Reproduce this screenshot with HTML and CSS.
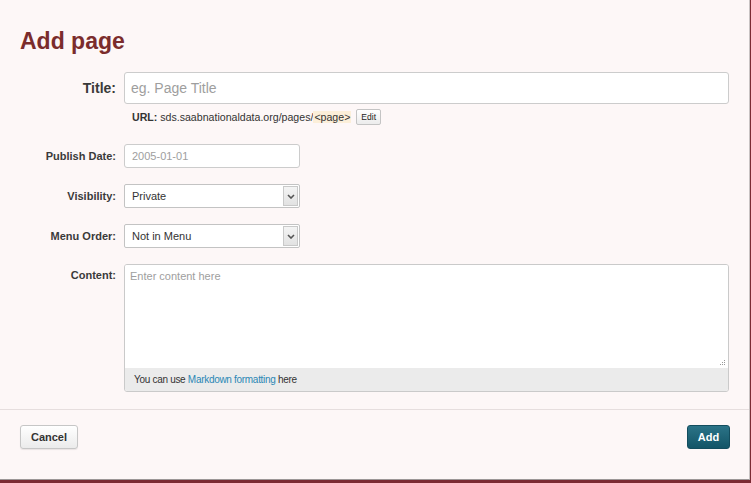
FILE: index.html
```html
<!DOCTYPE html>
<html>
<head>
<meta charset="utf-8">
<link rel="stylesheet" href="styles.css">
</head>
<body>
<div class="dialog">
  <h1 class="heading">Add page</h1>
  <div class="form">
    <div class="row row-title">
      <label class="label label-lg">Title:</label>
      <div class="input input-lg placeholder">eg. Page Title</div>
    </div>
    <div class="row row-url">
      <span></span>
      <div class="url"><b>URL:</b>&nbsp;sds.saabnationaldata.org/pages/<span class="slug">&lt;page&gt;</span><span class="edit-btn">Edit</span></div>
    </div>
    <div class="row row-small">
      <label class="label">Publish Date:</label>
      <div class="input input-sm placeholder">2005-01-01</div>
    </div>
    <div class="row row-small">
      <label class="label">Visibility:</label>
      <div class="select"><span class="select-text">Private</span><span class="select-arrow"><svg width="8" height="5" viewBox="0 0 8 5"><path d="M1 1 L4 4 L7 1" fill="none" stroke="#555" stroke-width="1.6"/></svg></span></div>
    </div>
    <div class="row row-small">
      <label class="label">Menu Order:</label>
      <div class="select"><span class="select-text">Not in Menu</span><span class="select-arrow"><svg width="8" height="5" viewBox="0 0 8 5"><path d="M1 1 L4 4 L7 1" fill="none" stroke="#555" stroke-width="1.6"/></svg></span></div>
    </div>
    <div class="row row-content">
      <label class="label label-top">Content:</label>
      <div class="textarea">
        <div class="textarea-body">
          <span class="placeholder">Enter content here</span>
          <svg class="grip" width="7" height="7" viewBox="0 0 7 7"><rect x="5" y="1" width="1" height="1" fill="#999"/><rect x="3" y="3" width="1" height="1" fill="#999"/><rect x="5" y="3" width="1" height="1" fill="#999"/><rect x="1" y="5" width="1" height="1" fill="#999"/><rect x="3" y="5" width="1" height="1" fill="#999"/><rect x="5" y="5" width="1" height="1" fill="#999"/></svg>
        </div>
        <div class="textarea-foot">You can use <span class="link">Markdown formatting</span> here</div>
      </div>
    </div>
  </div>
  <div class="footer">
    <span class="btn btn-default">Cancel</span>
    <span class="btn btn-primary">Add</span>
  </div>
</div>
</body>
</html>
```
FILE: styles.css
```css
html, body {
  margin: 0;
  padding: 0;
}
body {
  background: #7b2a33;
  font-family: "Liberation Sans", Arial, sans-serif;
  color: #333;
  width: 751px;
  height: 483px;
  overflow: hidden;
}
.dialog {
  width: 750px;
  height: 480px;
  box-sizing: border-box;
  background: #fdf7f7;
  border-right: 1px solid #c8c3c3;
  border-bottom: 1px solid #9c9797;
  display: flex;
  flex-direction: column;
}
.heading {
  margin: 0;
  padding: 27px 20px 0;
  font-size: 23px;
  line-height: 28px;
  font-weight: bold;
  color: #7b2c2c;
}
.form {
  padding: 0 20px;
}
.row {
  display: grid;
  grid-template-columns: 96px 1fr;
  column-gap: 8px;
  align-items: center;
}
.row-title {
  margin-top: 17px;
}
.row-url {
  margin-top: 5px;
}
.row-small {
  margin-top: 16px;
}
.row-url + .row-small {
  margin-top: 19px;
}
.row-content {
  margin-top: 16px;
  align-items: start;
}
.label {
  text-align: right;
  font-size: 11px;
  font-weight: bold;
  color: #3a3a3a;
}
.label-lg {
  font-size: 14px;
}
.label-top {
  padding-top: 5px;
}
.input {
  box-sizing: border-box;
  background: #fff;
  border: 1px solid #ccc;
  border-radius: 3px;
  display: flex;
  align-items: center;
}
.input-lg {
  height: 32px;
  padding: 0 6px;
  font-size: 14px;
}
.input-sm {
  width: 176px;
  height: 24px;
  padding: 0 7px;
  font-size: 11px;
}
.placeholder {
  color: #9e9e9e;
}
.url {
  display: flex;
  align-items: center;
  padding-left: 8px;
  font-size: 10.6px;
  color: #333;
  height: 16px;
  white-space: nowrap;
}
.slug {
  background: #fcefd9;
  padding: 0 1px;
}
.edit-btn {
  margin-left: 5px;
  box-sizing: border-box;
  height: 16px;
  padding: 0 4px;
  font-size: 8.5px;
  line-height: 14px;
  color: #222;
  border: 1px solid #c4c4c4;
  border-radius: 2px;
  background: linear-gradient(#ffffff, #ececec);
}
.select {
  box-sizing: border-box;
  width: 176px;
  height: 24px;
  background: #fff;
  border: 1px solid #c3c3c3;
  border-radius: 2px;
  display: flex;
  align-items: stretch;
  padding: 1px;
}
.select-text {
  flex: 1;
  font-size: 11px;
  color: #333;
  padding-left: 6px;
  display: flex;
  align-items: center;
}
.select-arrow {
  width: 15px;
  box-sizing: border-box;
  border: 1px solid #c9c9c9;
  background: linear-gradient(#f4f4f4, #e2e2e2);
  display: flex;
  align-items: center;
  justify-content: center;
}
.textarea {
  box-sizing: border-box;
  height: 128px;
  border: 1px solid #cacaca;
  border-radius: 3px;
  overflow: hidden;
  display: flex;
  flex-direction: column;
}
.textarea-body {
  position: relative;
  background: #fff;
  flex: 1;
  padding: 5px 5px;
  font-size: 11px;
}
.grip {
  position: absolute;
  right: 2px;
  bottom: 2px;
}
.textarea-foot {
  height: 23px;
  line-height: 23px;
  background: #ebebeb;
  padding-left: 9px;
  font-size: 10px;
  letter-spacing: -0.3px;
  color: #333;
  white-space: nowrap;
}
.link {
  color: #2a87b5;
}
.footer {
  margin-top: 17px;
  border-top: 1px solid #e6dede;
  padding: 15px 19px 0 20px;
  display: flex;
  justify-content: space-between;
  align-items: flex-start;
}
.btn {
  box-sizing: border-box;
  height: 24px;
  display: flex;
  align-items: center;
  justify-content: center;
  font-size: 11px;
  font-weight: bold;
  border-radius: 3px;
}
.btn-default {
  width: 58px;
  color: #333;
  border: 1px solid #c6c6c6;
  background: linear-gradient(#ffffff, #ebebeb);
  box-shadow: 0 1px 1px rgba(0,0,0,0.08);
}
.btn-primary {
  width: 43px;
  color: #fff;
  border: 1px solid #134d5e;
  background: linear-gradient(#2b7387, #135567);
}
```
